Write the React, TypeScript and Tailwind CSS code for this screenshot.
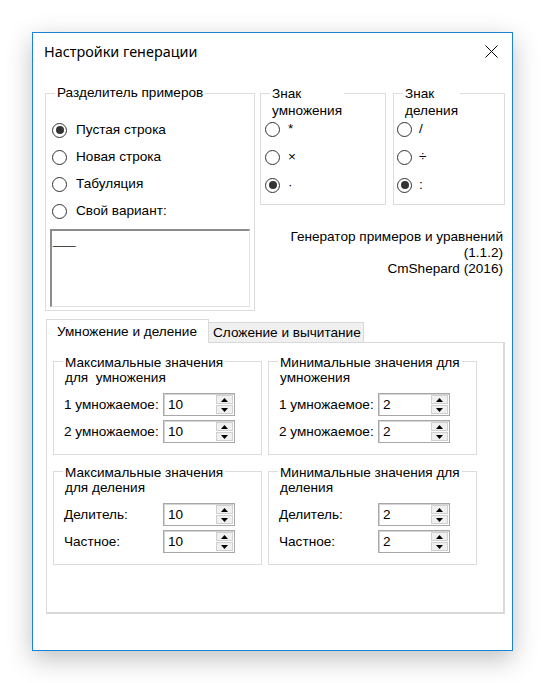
import type { ReactNode } from "react"

function Radio({ checked, label, gap }: { checked?: boolean; label: string; gap: string }) {
    return (
        <div className="flex h-[18px] items-center">
            <span className="flex h-[15px] w-[15px] shrink-0 items-center justify-center rounded-full border border-[#333333] bg-white">
                {checked && <span className="h-[8px] w-[8px] rounded-full bg-[#333333]" />}
            </span>
            <span className={gap}>{label}</span>
        </div>
    )
}

function GroupBox({
    title,
    className,
    legendClass,
    children,
}: {
    title: ReactNode
    className: string
    legendClass: string
    children: ReactNode
}) {
    return (
        <div className={`flex flex-col border border-[#dcdcdc] ${className}`}>
            <div className={`ml-[9px] self-start bg-white px-[2px] ${legendClass}`}>{title}</div>
            {children}
        </div>
    )
}

function Spin({ value }: { value: string }) {
    return (
        <div className="flex h-[23px] w-[72px] border border-[#a8a8a8] bg-white shadow-[inset_1px_1px_0_#d4d4d4]">
            <div className="flex flex-1 items-center pl-[4px]">{value}</div>
            <div className="flex w-[19px] flex-col gap-px p-px">
                <div className="flex flex-1 items-center justify-center border border-[#d0d0d0] bg-[#f0f0f0]">
                    <svg width="7" height="4" viewBox="0 0 7 4">
                        <path d="M0 4L3.5 0L7 4Z" fill="#000" />
                    </svg>
                </div>
                <div className="flex flex-1 items-center justify-center border border-[#d0d0d0] bg-[#f0f0f0]">
                    <svg width="7" height="4" viewBox="0 0 7 4">
                        <path d="M0 0L7 0L3.5 4Z" fill="#000" />
                    </svg>
                </div>
            </div>
        </div>
    )
}

function SpinRow({ label, value }: { label: string; value: string }) {
    return (
        <div className="flex h-[23px] items-center">
            <span className="w-[99px] whitespace-nowrap">{label}</span>
            <Spin value={value} />
        </div>
    )
}

export default function App() {
    return (
        <div className="min-h-screen bg-white pl-[32px] pt-[32px] font-['Liberation_Sans',Arial,sans-serif] text-[13.6px] leading-[16px] text-black">
            <div className="flex h-[619px] w-[481px] flex-col border border-[#1883d7] bg-white shadow-[0_8px_24px_rgba(0,0,0,0.25)]">
                {/* title bar */}
                <div className="flex h-[37px] shrink-0 items-center justify-between pl-[11px] pr-[14px]">
                    <span className="font-['Noto_Sans',sans-serif] text-[14.4px]">Настройки генерации</span>
                    <svg width="13" height="13" viewBox="0 0 13 13">
                        <path d="M0.5 0.5L12.5 12.5M12.5 0.5L0.5 12.5" stroke="#000" strokeWidth="1" />
                    </svg>
                </div>

                {/* top settings */}
                <div className="ml-[12px] mt-[23px] flex">
                    <GroupBox title="Разделитель примеров" className="h-[218px] w-[210px]" legendClass="-mt-[9px] leading-[16px]">
                        <div className="mt-[20px] flex flex-col gap-[9px] pl-[6px]">
                            <Radio checked label="Пустая строка" gap="ml-[9px]" />
                            <Radio label="Новая строка" gap="ml-[9px]" />
                            <Radio label="Табуляция" gap="ml-[9px]" />
                            <Radio label="Свой вариант:" gap="ml-[9px]" />
                        </div>
                        <div className="mx-[4px] mt-[9px] h-[78px] border-b border-l-2 border-r border-t-2 border-b-[#e3e3e3] border-l-[#8c8c8c] border-r-[#e3e3e3] border-t-[#8c8c8c] bg-white pl-[1px] pt-[1px] text-[#333]">
                            ___
                        </div>
                    </GroupBox>

                    <div className="ml-[5px] flex flex-col">
                        <div className="flex">
                            <GroupBox
                                title={<>Знак<br />умножения</>}
                                className="h-[112px] w-[126px]"
                                legendClass="-mt-[9px] leading-[17px]"
                            >
                                <div className="mt-[1px] flex flex-col gap-[10px] pl-[4px]">
                                    <Radio label="*" gap="ml-[8px]" />
                                    <Radio label="×" gap="ml-[8px]" />
                                    <Radio checked label="·" gap="ml-[8px]" />
                                </div>
                            </GroupBox>
                            <GroupBox
                                title={<>Знак<br />деления</>}
                                className="ml-[7px] h-[112px] w-[112px]"
                                legendClass="-mt-[9px] leading-[17px]"
                            >
                                <div className="mt-[1px] flex flex-col gap-[10px] pl-[3px]">
                                    <Radio label="/" gap="ml-[7px]" />
                                    <Radio label="÷" gap="ml-[7px]" />
                                    <Radio checked label=":" gap="ml-[7px]" />
                                </div>
                            </GroupBox>
                        </div>
                        <div className="mt-[24px] pr-[2px] text-right">
                            Генератор примеров и уравнений
                            <br />
                            (1.1.2)
                            <br />
                            CmShepard (2016)
                        </div>
                    </div>
                </div>

                {/* tabs */}
                <div className="ml-[13px] mt-[8px] flex flex-col">
                    <div className="relative z-10 -mb-px flex items-end">
                        <div className="flex h-[24px] w-[163px] items-center whitespace-nowrap border border-b-0 border-[#d9d9d9] bg-white pl-[10px]">
                            Умножение и деление
                        </div>
                        <div className="flex h-[21px] w-[155px] items-center whitespace-nowrap border border-l-0 border-[#d9d9d9] bg-[#f0f0f0] pl-[4px]">
                            Сложение и вычитание
                        </div>
                    </div>
                    <div className="grid h-[272px] w-[459px] grid-cols-[209px_209px] content-start gap-x-[6px] gap-y-[16px] border border-b-2 border-r-2 border-[#d9d9d9] pl-[6px] pt-[18px]">
                        <GroupBox
                            title={<span className="whitespace-pre">{"Максимальные значения\nдля  умножения"}</span>}
                            className="h-[94px]"
                            legendClass="-mt-[7px] leading-[15px]"
                        >
                            <div className="mt-[8px] flex flex-col gap-[4px] pl-[10px]">
                                <SpinRow label="1 умножаемое:" value="10" />
                                <SpinRow label="2 умножаемое:" value="10" />
                            </div>
                        </GroupBox>
                        <GroupBox
                            title={<>Минимальные значения для<br />умножения</>}
                            className="h-[94px]"
                            legendClass="-mt-[7px] leading-[15px]"
                        >
                            <div className="mt-[8px] flex flex-col gap-[4px] pl-[10px]">
                                <SpinRow label="1 умножаемое:" value="2" />
                                <SpinRow label="2 умножаемое:" value="2" />
                            </div>
                        </GroupBox>
                        <GroupBox
                            title={<>Максимальные значения<br />для деления</>}
                            className="h-[94px]"
                            legendClass="-mt-[7px] leading-[15px]"
                        >
                            <div className="mt-[8px] flex flex-col gap-[4px] pl-[10px]">
                                <SpinRow label="Делитель:" value="10" />
                                <SpinRow label="Частное:" value="10" />
                            </div>
                        </GroupBox>
                        <GroupBox
                            title={<>Минимальные значения для<br />деления</>}
                            className="h-[94px]"
                            legendClass="-mt-[7px] leading-[15px]"
                        >
                            <div className="mt-[8px] flex flex-col gap-[4px] pl-[10px]">
                                <SpinRow label="Делитель:" value="2" />
                                <SpinRow label="Частное:" value="2" />
                            </div>
                        </GroupBox>
                    </div>
                </div>
            </div>
        </div>
    )
}
